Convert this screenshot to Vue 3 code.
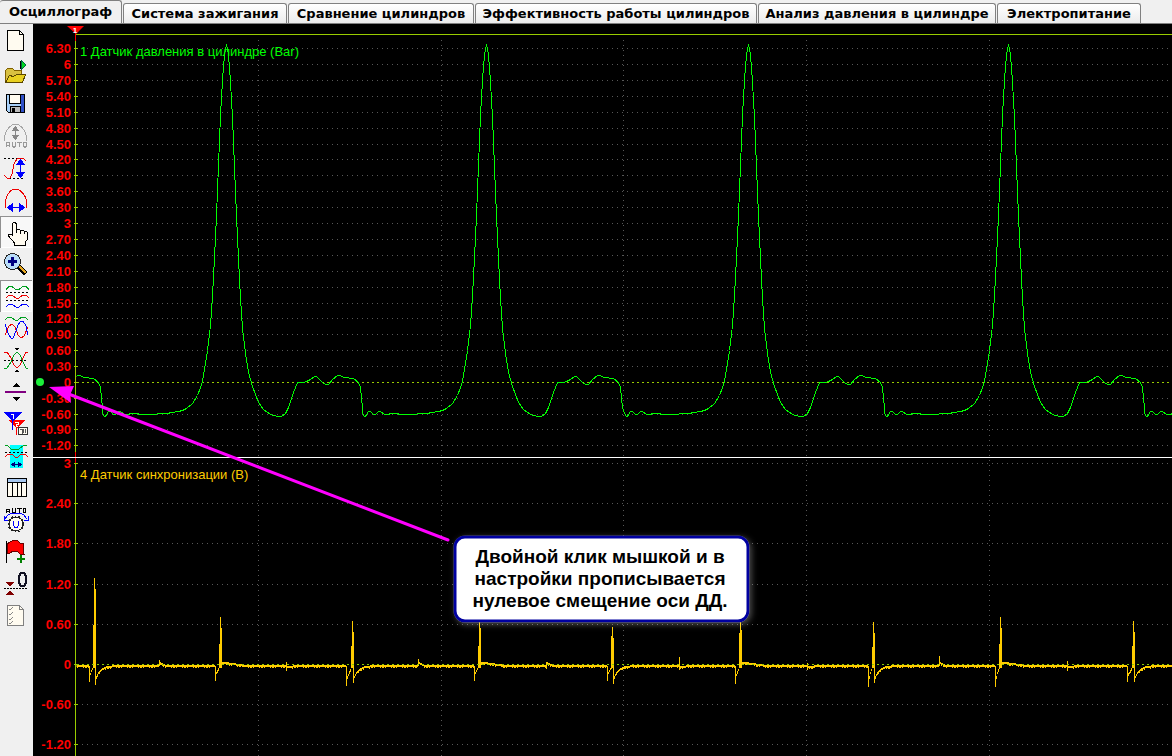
<template>
  <div class="app">
    <nav class="tabs" role="tablist">
      <button v-for="(tab, i) in tabs" :key="tab" type="button" role="tab" class="tab"
              :class="{ active: i === activeTab }" :aria-selected="i === activeTab"
              @click="activeTab = i">{{ tab }}</button>
    </nav>

    <div class="workspace">
      <aside class="toolbar">
        <button v-for="tool in tools" :key="tool.name" type="button" class="tool"
                :class="{ pressed: tool.pressed }" :disabled="tool.disabled" :aria-label="tool.name">
          <svg width="32" height="32" viewBox="0 0 32 32" fill="none" stroke-width="1" v-html="tool.art"></svg>
        </button>
      </aside>

      <main class="scope">
        <!-- the view box starts where the toolbar and tab strip end -->
        <svg class="plot" viewBox="33 24 1139 732" preserveAspectRatio="xMinYMin meet">
          <defs>
            <clipPath id="plot-area"><rect x="76" y="24" width="1096" height="732"/></clipPath>
            <filter id="glow" x="-10%" y="-20%" width="120%" height="150%">
              <feDropShadow dx="2" dy="2" stdDeviation="3" flood-color="#fff" flood-opacity="0.3"/>
            </filter>
          </defs>

          <g class="crisp" transform="translate(0.5 0.5)">
            <line v-for="x in gridX" :key="'gx' + x" class="grid" :x1="x" y1="39" :x2="x" y2="756"/>
            <line v-for="t in ticks" :key="'gy' + t.y" :class="t.zero ? 'zero' : 'grid'"
                  x1="76" :y1="t.y" x2="1172" :y2="t.y"/>
            <line class="axis" x1="75" y1="34" x2="1172" y2="34"/>
            <line class="axis" x1="75" y1="34" x2="75" y2="756"/>
            <line class="axis-end" x1="75" y1="32" x2="75" y2="40"/>
            <line class="axis-end" x1="75" y1="451" x2="75" y2="462"/>
            <line v-for="t in ticks" :key="'t' + t.y" class="axis" x1="73" :y1="t.y" x2="77" :y2="t.y"/>
          </g>

          <text v-for="t in ticks" :key="'l' + t.y" class="tick-label" x="71" :y="t.y + 5">{{ t.label }}</text>

          <text class="channel pressure" x="80" y="56">1 Датчик давления в цилиндре (Bar)</text>
          <text class="channel sync" x="80" y="479">4 Датчик синхронизации (В)</text>

          <g class="crisp" clip-path="url(#plot-area)" transform="translate(0.5 0.5)">
            <polyline class="trace pressure-trace" :points="pressurePoints"/>
            <path class="trace sync-trace" :d="syncPath"/>
            <line class="zero sync-zero" x1="76" y1="664" x2="1172" y2="664"/>
          </g>

          <rect class="splitter" x="33" y="457" width="1139" height="1"/>

          <path d="M67 26h17l-8 8z" fill="#f00"/>
          <text class="marker" x="75" y="33">1</text>
          <circle cx="40" cy="382" r="4" fill="#1bf03a"/>

          <line class="arrow" x1="66" y1="393" x2="448" y2="540"/>
          <path d="M49 387l25-1-4 9 1 8z" fill="#f0f"/>

          <rect class="callout" x="455" y="537" width="293" height="84" rx="10" filter="url(#glow)"/>
          <text v-for="(row, i) in note" :key="row" class="note" x="600" :y="563 + i * 22">{{ row }}</text>
        </svg>
      </main>
    </div>
  </div>
</template>

<script setup>
import { ref } from 'vue'

const tabs = [
  'Осциллограф',
  'Система зажигания',
  'Сравнение цилиндров',
  'Эффективность работы цилиндров',
  'Анализ давления в цилиндре',
  'Электропитание',
]
const activeTab = ref(0)

const note = ['Двойной клик мышкой и в', 'настройки прописывается', 'нулевое смещение оси ДД.']

const gridX = [258, 441, 623, 806, 989]

// Axis ticks: whole values are printed without decimals
function scale(from, count, step, zeroY, pitch) {
  return Array.from({ length: count }, (_, i) => {
    const k = from - i
    const v = k * step
    const whole = Math.abs(v - Math.round(v)) < 0.001
    return { y: Math.round(zeroY - k * pitch), zero: k === 0, label: whole ? String(Math.round(v)) : v.toFixed(2) }
  })
}
const ticks = [
  ...scale(21, 22, 0.3, 382, 15.9),
  ...scale(-1, 4, 0.3, 382, 15.8),
  ...scale(5, 8, 0.6, 664, 40.2),
]

// One engine cycle of cylinder pressure, x relative to the compression peak
const cycle = [
  [-124, 413], [-122, 416], [-121, 416], [-118, 411], [-116, 411], [-113, 414], [-111, 414], [-108, 411], [-106, 411],
  [-102, 414], [-99, 414], [-95, 413], [-90, 413], [-86, 414], [-72, 414], [-67, 413], [-59, 413], [-55, 412],
  [-48, 411], [-44, 410], [-40, 408], [-34, 403], [-29, 395], [-26, 387], [-24, 381], [-21, 363], [-19, 350],
  [-16, 325], [-14, 295], [-12, 257], [-10, 215], [-8, 165], [-6, 115], [-4, 80], [-3, 66], [-2, 55], [-1, 48], [0, 45],
  [1, 48], [2, 55], [3, 67], [4, 82], [6, 117], [8, 167], [10, 215], [12, 258], [14, 298], [16, 328], [19, 353], [22, 372],
  [26, 386], [32, 402], [37, 409], [44, 414], [51, 416], [55, 416], [59, 413], [62, 407], [65, 398], [67, 392],
  [71, 382], [77, 382], [80, 381], [84, 379], [88, 376], [90, 376], [93, 379], [96, 382], [99, 384], [102, 384],
  [106, 379], [111, 375], [114, 375], [117, 377], [127, 378], [132, 382], [134, 387], [136, 407],
]
const peaks = [-34, 226, 486, 748, 1008, 1268]
const pressurePoints = peaks.flatMap(p => cycle.map(([x, y]) => `${p + x},${y}`)).join(' ')

// Sync pulses: dip column and depth, spike column and top, then the undershoot or a high tail
const pulses = [
  { dip: 89, low: 681, x: 94, top: 577, side: 624, end: 684 },
  { dip: 215, low: 680, x: 220, top: 616, side: 643, high: true },
  { dip: 346, low: 685, x: 352, top: 620, side: 645, end: 682 },
  { dip: 474, low: 680, x: 479, top: 616, side: 645, high: true },
  { dip: 607, low: 680, x: 612, top: 626, side: 635, end: 683 },
  { dip: 735, low: 683, x: 740, top: 618, side: 632, high: true },
  { dip: 868, low: 686, x: 873, top: 621, side: 646, end: 682 },
  { dip: 995, low: 686, x: 1000, top: 616, side: 643, high: true },
  { dip: 1127, low: 681, x: 1133, top: 620, side: 645, end: 681 },
]
const blips = [
  { x: 159, top: 659, end: 665 }, { x: 286, top: 661, end: 670 }, { x: 418, top: 658, end: 665 },
  { x: 546, top: 661, end: 668 }, { x: 679, top: 656, end: 669 }, { x: 807, top: 662, end: 669 },
  { x: 939, top: 655, end: 665 }, { x: 1067, top: 660, end: 670 },
]

function buildSync() {
  const level = x => {
    for (const p of pulses) {
      const after = x - p.x - 2
      if (x >= p.dip && x < p.x) return 666 + Math.round((p.low - 670) * (p.x - 1 - x) / (p.x - p.dip))
      if (after >= 0 && after < 24) return p.high ? 662 + Math.floor(after / 7) : 665 + Math.round(11 * Math.exp(-after / 5))
    }
    for (const b of blips) {
      const after = x - b.x
      if (after >= 0 && after < 7) return b.end > 668 ? 666 : 662 + Math.floor(after / 2)
    }
    return 665
  }
  let d = ''
  for (let x = 76; x < 1172; x++) {
    const y = level(x)
    const jitter = (x * x * 7 + x * 13) % 11 < 3 ? 1 : 0
    d += `M${x} ${y - 0.5}v${2 + jitter}`
  }
  for (const p of pulses) {
    d += `M${p.dip} 665V${p.low}M${p.x - 1} ${p.side}V667M${p.x} ${p.top}V667M${p.x + 1} ${p.top + 11}V${p.end || 667}`
  }
  for (const b of blips) d += `M${b.x} ${b.top}V${b.end}`
  return d
}
const syncPath = buildSync()

const tools = [
  { name: 'Новый', art: '<path d="M7.500 6.500h12l4 4v16h-16z" fill="#fffbf0" stroke="#000"/><path d="M19.500 6.500v4h4" stroke="#000"/>' },
  { name: 'Открыть', art: '<path d="M5.500 26.500v-12l2-2h5l2 2h7v4" fill="#d8c040" stroke="#806000"/><path d="M5.500 26.500l4-7 4 1 3-2h9l-3 8z" fill="#e8d020" stroke="#5a4600"/><path d="M20.500 5v8" stroke="#000"/><path d="M21 4l5 5-5 5z" fill="#00d820" stroke="#064"/>' },
  { name: 'Сохранить', art: '<path d="M6.500 6.500h18v18h-16l-2-2z" fill="#a8d0f8" stroke="#000"/><path d="M21 7h3v17h-3z" fill="#3050c8"/><path d="M9.500 6.500h11v9h-11z" fill="#fffbf0" stroke="#000"/><path d="M10.500 18.500h10v6h-10z" fill="#bbb" stroke="#000"/><path d="M12 20h3v4h-3z" fill="#000"/>' },
  { name: 'Автоусиление', disabled: true, art: '<path d="M4.500 21v-4q1-6 5-10 3-3 6-3t6 3q4 4 5 10v4" stroke="#a6a6a6"/><path d="M15.500 7v13" stroke="#888"/><path d="M15.500 6l4 5h-8zM15.500 20l4-5h-8z" fill="#888"/><path d="M6.500 27v-4l1-1h1l1 1v4M6.500 25h3M12.500 22v4l1 1h1l1-1v-4M17 22.500h5M19.500 22v5M23.500 23l1-1h1l1 1v3l-1 1h-1l-1-1z" stroke="#999"/>' },
  { name: 'Размах', art: '<path d="M4 6.500h16M9 26.500h16" stroke="#000" stroke-dasharray="2 2"/><path d="M4 23l3 3h3l2-4 2-10 3-5 3-1h3l3 3" stroke="#e00"/><path d="M20.500 9v15" stroke="#00f"/><path d="M20.500 7l5 6h-10zM20.500 26l5-6h-10z" fill="#00f"/>' },
  { name: 'Период', art: '<path d="M5.500 24v-7q1-6 5-10 2-2 5-2t5 2q5 4 6 10v7" stroke="#e00"/><path d="M9 23.500h14" stroke="#00f"/><path d="M7 23.500l6-5v10zM25 23.500l-6-5v10z" fill="#00f"/>' },
  { name: 'Рука', pressed: true, art: '<path d="M12.500 20V8l1-2h1l2 2v7l1-2h2l1 2 1-1h2l1 2 1-1h1l1 2v6l-2 3v3h-11v-2l-6-7v-2h3z" fill="#fffbf0" stroke="#000"/><path d="M16.500 13v4M20.500 14v4M24.500 15v3" stroke="#000"/>' },
  { name: 'Увеличить', art: '<path d="M18 18l8 8" stroke="#000" stroke-width="5"/><path d="M19 18l7 7" stroke="#e8a820" stroke-width="2"/><circle cx="12.500" cy="13.500" r="8" fill="#b8dcf8" stroke="#222"/><path d="M8 13.500h9M12.500 9v9" stroke="#000080" stroke-width="3"/>' },
  { name: 'Раздельно', pressed: true, art: '<path d="M6 9.500l3-3h3l4 3h3l4-3h3l3 3" stroke="#00a020"/><path d="M6 12.500h23M6 20.500h23" stroke="#000" stroke-dasharray="2 2"/><path d="M6 18l3-3h3l4 3h3l4-3h3l3 3" stroke="#e00"/><path d="M6 27l3-3h3l4 3h3l4-3h3l3 3" stroke="#00f"/>' },
  { name: 'Совместно', art: '<path d="M5 8l3-3h3l4 3h3l4-3h3l3 3" stroke="#00a020"/><path d="M5 23l4-9 3-2 3 3 3 8 3 3 3-2 4-9" stroke="#e00"/><path d="M5 12l3 9 3 5h2l3-7 2-6 3-4h2l3 5 2 9" stroke="#00f"/>' },
  { name: 'Центрировать', art: '<path d="M4 8h3l4 6 3 7 3 3 3-3 3-7 3-6h2" stroke="#e00"/><path d="M4 24h3l4-6 3-7 3-3 3 3 3 7 3 6h2" stroke="#00a020"/><path d="M4 16.500h24" stroke="#000" stroke-dasharray="2 2"/><path d="M14 4h5l-2 3zM14 28h5l-2-3z" fill="#000"/>' },
  { name: 'Ноль', art: '<path d="M12 11h8l-4-4zM12 21h8l-4 4z" fill="#000"/><path d="M5 16h21" stroke="#800080" stroke-width="2"/>' },
  { name: 'Маркеры', art: '<path d="M8 12h17l-8 9z" fill="#f00"/><path d="M16.500 20v7" stroke="#f00"/><path d="M15 14h3v2h-2v2h2" stroke="#fff"/><path d="M4 4h18l-9 10z" fill="#00f"/><path d="M12.500 12v10" stroke="#00f"/><path d="M11 6h2v5" stroke="#fff"/><path d="M18.500 19.500h9v7h-9z" fill="#fffbf0" stroke="#333"/><path d="M20 21.500h2v4M23.500 21v4M25.500 21v4" stroke="#555"/>' },
  { name: 'Диапазон', art: '<path d="M10 5h13v23h-13z" fill="#0ff"/><path d="M5 5l3 1 3 3h8l4-3 4-1" stroke="#00a020"/><path d="M5 12.500h23" stroke="#000" stroke-dasharray="2 2"/><path d="M5 17l3-3h4l3 3h3l3-3h4l3 3" stroke="#e00"/><path d="M12 24.500h10" stroke="#000080"/><path d="M11 24.500l4-3v6zM22 24.500l-4-3v6z" fill="#000080"/>' },
  { name: 'Таблица', art: '<path d="M7.500 6.500h19v18h-19z" fill="#fffbf0" stroke="#000"/><path d="M8 7h18v3H8z" fill="#a8c8f0"/><path d="M7 10.500h19M12.500 11v14M17.500 11v14M21.500 11v14" stroke="#000"/>' },
  { name: 'Автонапряжение', art: '<path d="M6.500 9v-3l1-1h1l1 1v3M6.500 7.500h3M12.500 4v4h3v-4M17 4.500h5M19.500 4v5M23.500 4.500h2v4h-2z" stroke="#000"/><path d="M5 15l3-4 4-2h8l4 2 3 4" stroke="#00f"/><path d="M4 12v4h4M28 12v4h-4" stroke="#00f"/><circle cx="16" cy="20" r="7" fill="#fffbf0" stroke="#222"/><circle cx="16" cy="20" r="8" stroke="#222" stroke-dasharray="2 2"/><path d="M13.500 17v4l1 2h3l1-2v-4" stroke="#00f"/>' },
  { name: 'Флаг', art: '<path d="M6.500 5v22" stroke="#000"/><path d="M7 8l3-2 4-2h3l3 3h3v9l1 2h-4l-3-3h-4l-3 2-3 1z" fill="#f00" stroke="#600"/><path d="M17 23h8M21 19v8" stroke="#008000" stroke-width="2"/>' },
  { name: 'Смещение нуля', art: '<path d="M19 8l2-3h3l2 3v7l-2 3h-3l-2-3z" stroke="#112" stroke-width="2"/><path d="M4 20.500h23" stroke="#000" stroke-dasharray="2 1"/><path d="M5 14h9l-4 5zM5 27h9l-4-5z" fill="#800000"/>' },
  { name: 'Отчёт', disabled: true, art: '<path d="M7.500 5.500h12l4 4v16h-16z" fill="#fffbf0" stroke="#808080"/><path d="M19.500 5.500v4h4" stroke="#808080"/><path d="M9 9l1 1 3-3M9 14l1 1 3-3M9 19l1 1 3-3M9 23l1 1 3-3" stroke="#888"/>' },
]
</script>

<style>
body { background: #000; }
</style>

<style scoped>
.app {
  display: flex;
  flex-direction: column;
  min-height: 100vh;
  background: #000;
  font-family: "Liberation Sans", Arial, sans-serif;
}
.tabs {
  display: grid;
  grid-template-columns: 122px 164px 186px 282px 238px 144px;
  column-gap: 1px;
  align-items: end;
  height: 24px;
  box-sizing: border-box;
  background: #f0f0f0;
  border-bottom: 1px solid #808080;
}
.tab {
  height: 20px;
  padding: 0;
  border: 1px solid #808080;
  border-bottom: 0;
  border-radius: 3px 3px 0 0;
  background: linear-gradient(#fff, #ececec);
  color: #000;
  font: bold 13px/18px "DejaVu Sans", Verdana, sans-serif;
  white-space: nowrap;
}
.tab.active {
  height: 23px;
  border-left: 0;
  background: #f0f0f0;
}
.workspace {
  display: flex;
  flex: 1;
}
.toolbar {
  display: flex;
  flex-direction: column;
  flex: 0 0 33px;
  background: #f0f0f0;
}
.tool {
  width: 32px;
  height: 32px;
  padding: 0;
  border: 0;
  background: none;
}
.tool svg {
  display: block;
  shape-rendering: crispEdges;
}
.tool.pressed {
  background: #f8f8f8;
  box-shadow: inset 1px 1px #909090, inset -1px -1px #fff;
}
.scope {
  flex: 1;
  min-width: 0;
  background: #000;
}
.plot {
  display: block;
  width: 100%;
}
.crisp { shape-rendering: crispEdges; }
.grid { stroke: #585858; stroke-dasharray: 1 4; }
.zero { stroke: #9c0; stroke-dasharray: 2 3; }
.sync-zero { stroke: #8c0; }
.axis { stroke: #9c0; }
.axis-end { stroke: #f00; }
.tick-label {
  fill: #f00;
  font-size: 13px;
  font-weight: bold;
  text-anchor: end;
}
.channel { font-size: 13px; }
.pressure { fill: #0f0; }
.sync { fill: #fc0; }
.trace { fill: none; stroke-width: 1; }
.pressure-trace { stroke: #0f0; }
.sync-trace { stroke: #fc0; }
.splitter { fill: #fff; }
.marker {
  fill: #fff;
  font-size: 8px;
  font-weight: bold;
  text-anchor: middle;
}
.arrow {
  stroke: #f0f;
  stroke-width: 3;
  stroke-linecap: round;
}
.callout {
  fill: #fff;
  stroke: #0000a0;
  stroke-width: 3;
}
.note {
  fill: #000;
  font-size: 19px;
  font-weight: bold;
  text-anchor: middle;
}
</style>
